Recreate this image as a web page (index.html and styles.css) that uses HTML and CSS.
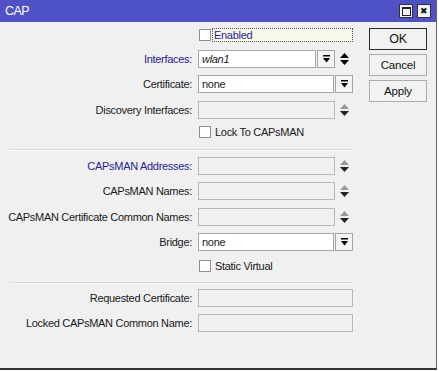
FILE: index.html
```html
<!DOCTYPE html>
<html lang="en">
<head>
  <meta charset="UTF-8" />
  <title>CAP</title>
  <link rel="stylesheet" href="styles.css">
</head>
<body>
  <div class="window">
    <div class="titlebar">
      <span class="title">CAP</span>
      <div class="title-btns">
        <span class="tbtn max"><span class="max-box"></span></span>
        <span class="tbtn close">&#x2716;</span>
      </div>
    </div>

    <div class="main">
      <div class="form">
        <div class="row h22">
          <div class="label"></div>
          <div class="check">
            <span class="box"></span>
            <span class="focus blue">Enabled</span>
          </div>
        </div>

        <div class="row h25">
          <div class="label blue">Interfaces:</div>
          <div class="field">
            <div class="input italic">wlan1</div>
            <div class="drop">
              <svg width="7" height="8" viewBox="0 0 7 8"><rect x="0" y="0" width="7" height="1.5" fill="#000"/><polygon points="0,3 7,3 3.5,7.5" fill="#000"/></svg>
            </div>
            <div class="updown">
              <svg width="9" height="12" viewBox="0 0 9 12"><polygon points="4.5,0 9,5 0,5" fill="#000"/><polygon points="0,7 9,7 4.5,12" fill="#000"/></svg>
            </div>
          </div>
        </div>

        <div class="row h26">
          <div class="label">Certificate:</div>
          <div class="field">
            <div class="input">none</div>
            <div class="drop">
              <svg width="7" height="8" viewBox="0 0 7 8"><rect x="0" y="0" width="7" height="1.5" fill="#000"/><polygon points="0,3 7,3 3.5,7.5" fill="#000"/></svg>
            </div>
          </div>
        </div>

        <div class="row h25">
          <div class="label">Discovery Interfaces:</div>
          <div class="field">
            <div class="input off"></div>
            <div class="updown">
              <svg width="9" height="12" viewBox="0 0 9 12"><polygon points="4.5,0 9,5 0,5" fill="#9a9a9a"/><polygon points="0,7 9,7 4.5,12" fill="#222"/></svg>
            </div>
          </div>
        </div>

        <div class="row h20">
          <div class="label"></div>
          <div class="check">
            <span class="box"></span>
            <span class="text">Lock To CAPsMAN</span>
          </div>
        </div>

        <div class="sep sep1"></div>

        <div class="row h25">
          <div class="label blue">CAPsMAN Addresses:</div>
          <div class="field">
            <div class="input off"></div>
            <div class="updown">
              <svg width="9" height="12" viewBox="0 0 9 12"><polygon points="4.5,0 9,5 0,5" fill="#9a9a9a"/><polygon points="0,7 9,7 4.5,12" fill="#222"/></svg>
            </div>
          </div>
        </div>

        <div class="row h26">
          <div class="label">CAPsMAN Names:</div>
          <div class="field">
            <div class="input off"></div>
            <div class="updown">
              <svg width="9" height="12" viewBox="0 0 9 12"><polygon points="4.5,0 9,5 0,5" fill="#9a9a9a"/><polygon points="0,7 9,7 4.5,12" fill="#222"/></svg>
            </div>
          </div>
        </div>

        <div class="row h25">
          <div class="label">CAPsMAN Certificate Common Names:</div>
          <div class="field">
            <div class="input off"></div>
            <div class="updown">
              <svg width="9" height="12" viewBox="0 0 9 12"><polygon points="4.5,0 9,5 0,5" fill="#9a9a9a"/><polygon points="0,7 9,7 4.5,12" fill="#222"/></svg>
            </div>
          </div>
        </div>

        <div class="row h26">
          <div class="label">Bridge:</div>
          <div class="field">
            <div class="input">none</div>
            <div class="drop">
              <svg width="7" height="8" viewBox="0 0 7 8"><rect x="0" y="0" width="7" height="1.5" fill="#000"/><polygon points="0,3 7,3 3.5,7.5" fill="#000"/></svg>
            </div>
          </div>
        </div>

        <div class="row h22">
          <div class="label"></div>
          <div class="check">
            <span class="box"></span>
            <span class="text">Static Virtual</span>
          </div>
        </div>

        <div class="sep sep2"></div>

        <div class="row h25">
          <div class="label">Requested Certificate:</div>
          <div class="field">
            <div class="input off"></div>
          </div>
        </div>

        <div class="row h25">
          <div class="label">Locked CAPsMAN Common Name:</div>
          <div class="field">
            <div class="input off"></div>
          </div>
        </div>
      </div>

      <div class="buttons">
        <button class="btn default">OK</button>
        <button class="btn">Cancel</button>
        <button class="btn">Apply</button>
      </div>
    </div>
  </div>
</body>
</html>
```

FILE: styles.css
```css
body {
  margin: 0;
  padding: 0;
  background-color: #ffffff;
  font-family: "Liberation Sans", Arial, sans-serif;
  font-size: 11px;
  letter-spacing: -0.3px;
  color: #1a1a1a;
}

.window {
  width: 436px;
  height: 368px;
  background-color: #f0f0f0;
  border-right: 1px solid #6a6a6a;
  border-bottom: 2px solid #333;
}

.titlebar {
  height: 22px;
  background-color: #4f51c7;
  display: flex;
  align-items: center;
  justify-content: space-between;
}

.title {
  color: #fff;
  font-size: 12.5px;
  letter-spacing: -0.6px;
  padding-left: 5px;
}

.title-btns {
  display: flex;
  gap: 4px;
  padding-right: 5px;
}

.tbtn {
  width: 12px;
  height: 12px;
  background-color: #f2f2f2;
  border: 1px solid #333;
  display: flex;
  align-items: center;
  justify-content: center;
}

.max-box {
  width: 7px;
  height: 6px;
  border: 1px solid #222;
  border-top-width: 2px;
}

.close {
  font-size: 9px;
  color: #111;
  line-height: 1;
}

.main {
  display: flex;
}

.form {
  width: 360px;
  padding-top: 2px;
}

.row {
  display: flex;
  align-items: center;
}

.h20 { height: 20px; }
.h22 { height: 22px; }
.h25 { height: 25px; }
.h26 { height: 26px; }

.label {
  width: 192px;
  text-align: right;
  white-space: nowrap;
  flex-shrink: 0;
}

.blue {
  color: #24249a;
}

.field {
  display: flex;
  align-items: center;
  width: 155px;
  margin-left: 6px;
}

.input {
  flex: 1;
  height: 16px;
  line-height: 16px;
  padding-left: 3px;
  background-color: #fff;
  border: 1px solid #a6a6a6;
}

.input.off {
  background-color: #f0f0f0;
  border-color: #b8b8b8;
}

.italic {
  font-style: italic;
}

.drop {
  width: 16px;
  height: 16px;
  margin-left: 1px;
  border: 1px solid #a6a6a6;
  background-color: #f4f4f4;
  display: flex;
  align-items: center;
  justify-content: center;
}

.updown {
  width: 18px;
  display: flex;
  justify-content: center;
}

.check {
  display: flex;
  align-items: center;
  margin-left: 7px;
}

.box {
  width: 10px;
  height: 10px;
  background-color: #fff;
  border: 1px solid #8f8f8f;
}

.text {
  margin-left: 4px;
}

.focus {
  margin-left: 1px;
  width: 138px;
  height: 12px;
  line-height: 12px;
  padding-left: 1px;
  border: 1px dotted #555;
  background-color: #f8f8e8;
}

.sep {
  margin-left: 10px;
  width: 343px;
  height: 1px;
  background-color: #d9d9d9;
  border-bottom: 1px solid #fafafa;
}

.sep1 {
  margin-top: 7px;
  margin-bottom: 2px;
}

.sep2 {
  margin-top: 5px;
  margin-bottom: 1px;
}

.buttons {
  display: flex;
  flex-direction: column;
  gap: 4px;
  padding-top: 6px;
  padding-left: 9px;
}

.btn {
  width: 58px;
  height: 22px;
  font-family: "Liberation Sans", Arial, sans-serif;
  font-size: 11.5px;
  letter-spacing: -0.2px;
  color: #111;
  background-color: #f2f2f2;
  border: 1px solid #adadad;
  padding: 0;
}

.btn.default {
  border-color: #2b2b2b;
  font-size: 12.5px;
}
```
